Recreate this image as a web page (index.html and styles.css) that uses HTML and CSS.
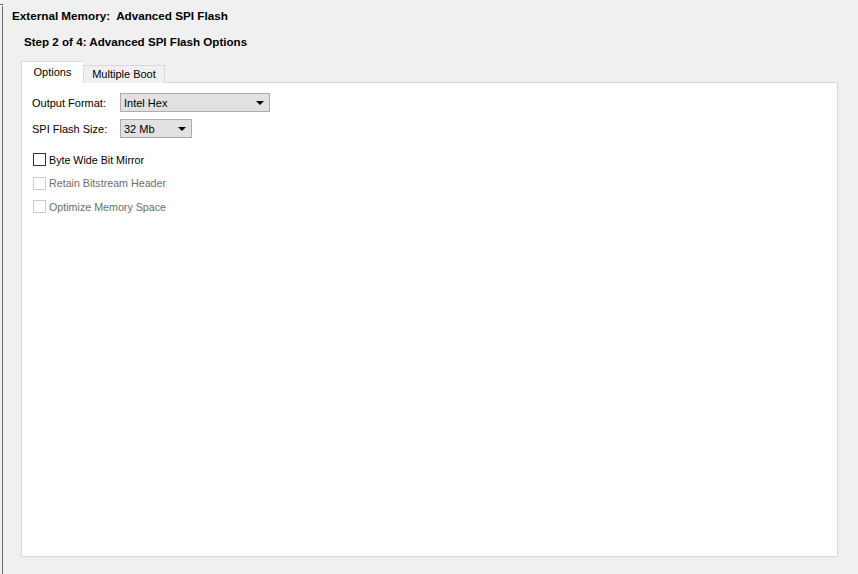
FILE: index.html
```html
<!DOCTYPE html>
<html lang="en">
<head>
  <meta charset="UTF-8" />
  <title>External Memory: Advanced SPI Flash</title>
  <link rel="stylesheet" href="styles.css">
</head>
<body>
  <div class="edge"></div>
  <div class="page">
    <h1 class="title">External Memory:&nbsp; Advanced SPI Flash</h1>
    <h2 class="step">Step 2 of 4: Advanced SPI Flash Options</h2>

    <div class="tabs">
      <div class="tab active">Options</div>
      <div class="tab boot">Multiple Boot</div>
    </div>

    <div class="panel">
      <div class="row">
        <label class="lbl">Output Format:</label>
        <div class="combo wide"><span>Intel Hex</span><i class="arrow"></i></div>
      </div>
      <div class="row">
        <label class="lbl">SPI Flash Size:</label>
        <div class="combo narrow"><span>32 Mb</span><i class="arrow"></i></div>
      </div>

      <div class="checks">
        <div class="check"><span class="box"></span>Byte Wide Bit Mirror</div>
        <div class="check disabled"><span class="box"></span>Retain Bitstream Header</div>
        <div class="check disabled"><span class="box"></span>Optimize Memory Space</div>
      </div>
    </div>
  </div>
</body>
</html>
```

FILE: styles.css
```css
html, body {
  margin: 0;
  height: 100%;
}
body {
  background: #f0f0f0;
  font-family: "Liberation Sans", Arial, sans-serif;
  font-size: 11px;
  color: #000;
  position: relative;
  overflow: hidden;
}
.edge {
  position: absolute;
  left: 2px;
  top: 6px;
  bottom: 0;
  width: 1px;
  background: #6b6b6b;
}
.edge::before {
  content: "";
  position: absolute;
  left: -2px;
  top: -2px;
  width: 3px;
  height: 1px;
  background: #6b6b6b;
}
.page {
  padding: 0 20px 0 21px;
}
.title {
  margin: 0 0 0 -9px;
  padding-top: 9px;
  font-size: 11.7px;
  font-weight: bold;
  height: 16px;
  line-height: 13px;
}
.step {
  margin: 0;
  padding: 10px 0 0 3px;
  font-size: 11.6px;
  font-weight: bold;
  line-height: 13px;
  height: 27px;
}
.tabs {
  display: flex;
  align-items: flex-end;
  height: 21px;
  position: relative;
  z-index: 1;
}
.tab {
  border: 1px solid #d9d9d9;
  border-bottom: none;
  background: #f0f0f0;
  height: 17px;
  line-height: 17px;
  text-align: center;
  width: 80px;
  box-sizing: content-box;
}
.tab.active {
  background: #fff;
  height: 21px;
  line-height: 21px;
  width: 61px;
  border-right: none;
}
.panel {
  background: #fff;
  border: 1px solid #d9d9d9;
  height: 475px;
  margin-top: -1px;
  padding: 10px;
  box-sizing: border-box;
}
.row {
  display: flex;
  align-items: center;
  height: 19px;
  margin-bottom: 7px;
}
.lbl {
  width: 88px;
}
.combo {
  height: 17px;
  border: 1px solid #adadad;
  background: #e1e1e1;
  display: flex;
  align-items: center;
  justify-content: space-between;
  padding: 0 5px 0 3px;
}
.combo.wide { width: 140px; }
.combo.narrow { width: 62px; }
.arrow {
  width: 0;
  height: 0;
  border-left: 4px solid transparent;
  border-right: 4px solid transparent;
  border-top: 4px solid #000;
}
.checks {
  margin-top: 14px;
  font-size: 10.7px;
}
.check {
  display: flex;
  align-items: center;
  height: 15px;
  margin-bottom: 8.5px;
}
.box {
  width: 11px;
  height: 11px;
  border: 1px solid #333;
  background: #fff;
  margin: 0 3px 0 1px;
}
.check.disabled {
  color: #6d6d6d;
}
.check.disabled .box {
  border-color: #cccccc;
}
```
